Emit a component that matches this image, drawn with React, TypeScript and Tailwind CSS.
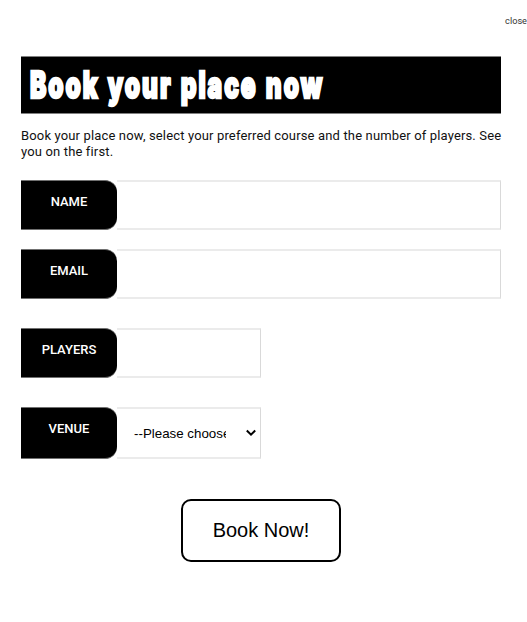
import type { ReactNode } from "react";

function Label({ children, tall }: { children: ReactNode; tall?: boolean }) {
  return (
    <div
      className={`w-24 shrink-0 rounded-r-[12px] border-y border-[#707070] bg-black pt-[13px] text-center text-[13px] leading-4 font-medium text-white ${tall ? "h-[52px]" : "h-[50px]"}`}
    >
      {children}
    </div>
  );
}

const field = "min-w-0 flex-1 border-y-2 border-r border-y-[#ebebeb] border-r-[#d9d9d9] bg-white outline-none";

export default function App() {
  return (
    <div className="h-[622px] w-[527px] overflow-hidden bg-white font-['Roboto','Liberation_Sans',sans-serif] text-black">
      <div className="flex h-14 justify-end pt-[15px] text-[9.2px] leading-3 text-[#333]">
        <span>close</span>
      </div>
      <form className="ml-[21px] w-[480px]" onSubmit={(e) => e.preventDefault()}>
        <h1 className="h-[58px] overflow-hidden border-y border-[#808080] bg-black pt-[5px] pl-[9px] font-['Inter'] text-[37px] leading-[46px] font-black whitespace-nowrap text-white">
          <span className="inline-block origin-left scale-x-[0.66] tracking-[3px] [word-spacing:2px] [-webkit-text-stroke:2.4px_white]">
            Book your place now
          </span>
        </h1>
        <p className="mt-[14px] h-[52px] text-[13px] leading-4 tracking-[0.15px] whitespace-nowrap text-[#111]">
          Book your place now, select your preferred course and the number of players. See
          <br />
          you on the first.
        </p>
        <div className="flex h-[50px]">
          <Label>NAME</Label>
          <input aria-label="Name" className={field} />
        </div>
        <div className="mt-[19px] flex h-[50px]">
          <Label>EMAIL</Label>
          <input aria-label="Email" className={field} />
        </div>
        <div className="mt-[29px] flex h-[50px] w-60">
          <Label>PLAYERS</Label>
          <input aria-label="Players" className={field} />
        </div>
        <div className="mt-[29px] flex h-[52px] w-60">
          <Label tall>VENUE</Label>
          <div className={`${field} flex items-center pl-[17px] font-['Liberation_Sans'] text-[13.33px]`}>
            <span className="w-[92px] overflow-hidden pt-0.5 whitespace-nowrap">--Please choose an option--</span>
            <svg className="ml-[19px]" width="12" height="8" viewBox="0 0 12 8" fill="none" stroke="black" strokeWidth="2">
              <path d="M1.8 1.5 6 5.7l4.2-4.2" />
            </svg>
          </div>
        </div>
        <button className="mt-10 ml-40 flex h-[63px] w-40 items-center justify-center rounded-[10px] border-2 border-black pb-0.5 font-['Liberation_Sans'] text-[20px]">
          Book Now!
        </button>
      </form>
    </div>
  );
}
